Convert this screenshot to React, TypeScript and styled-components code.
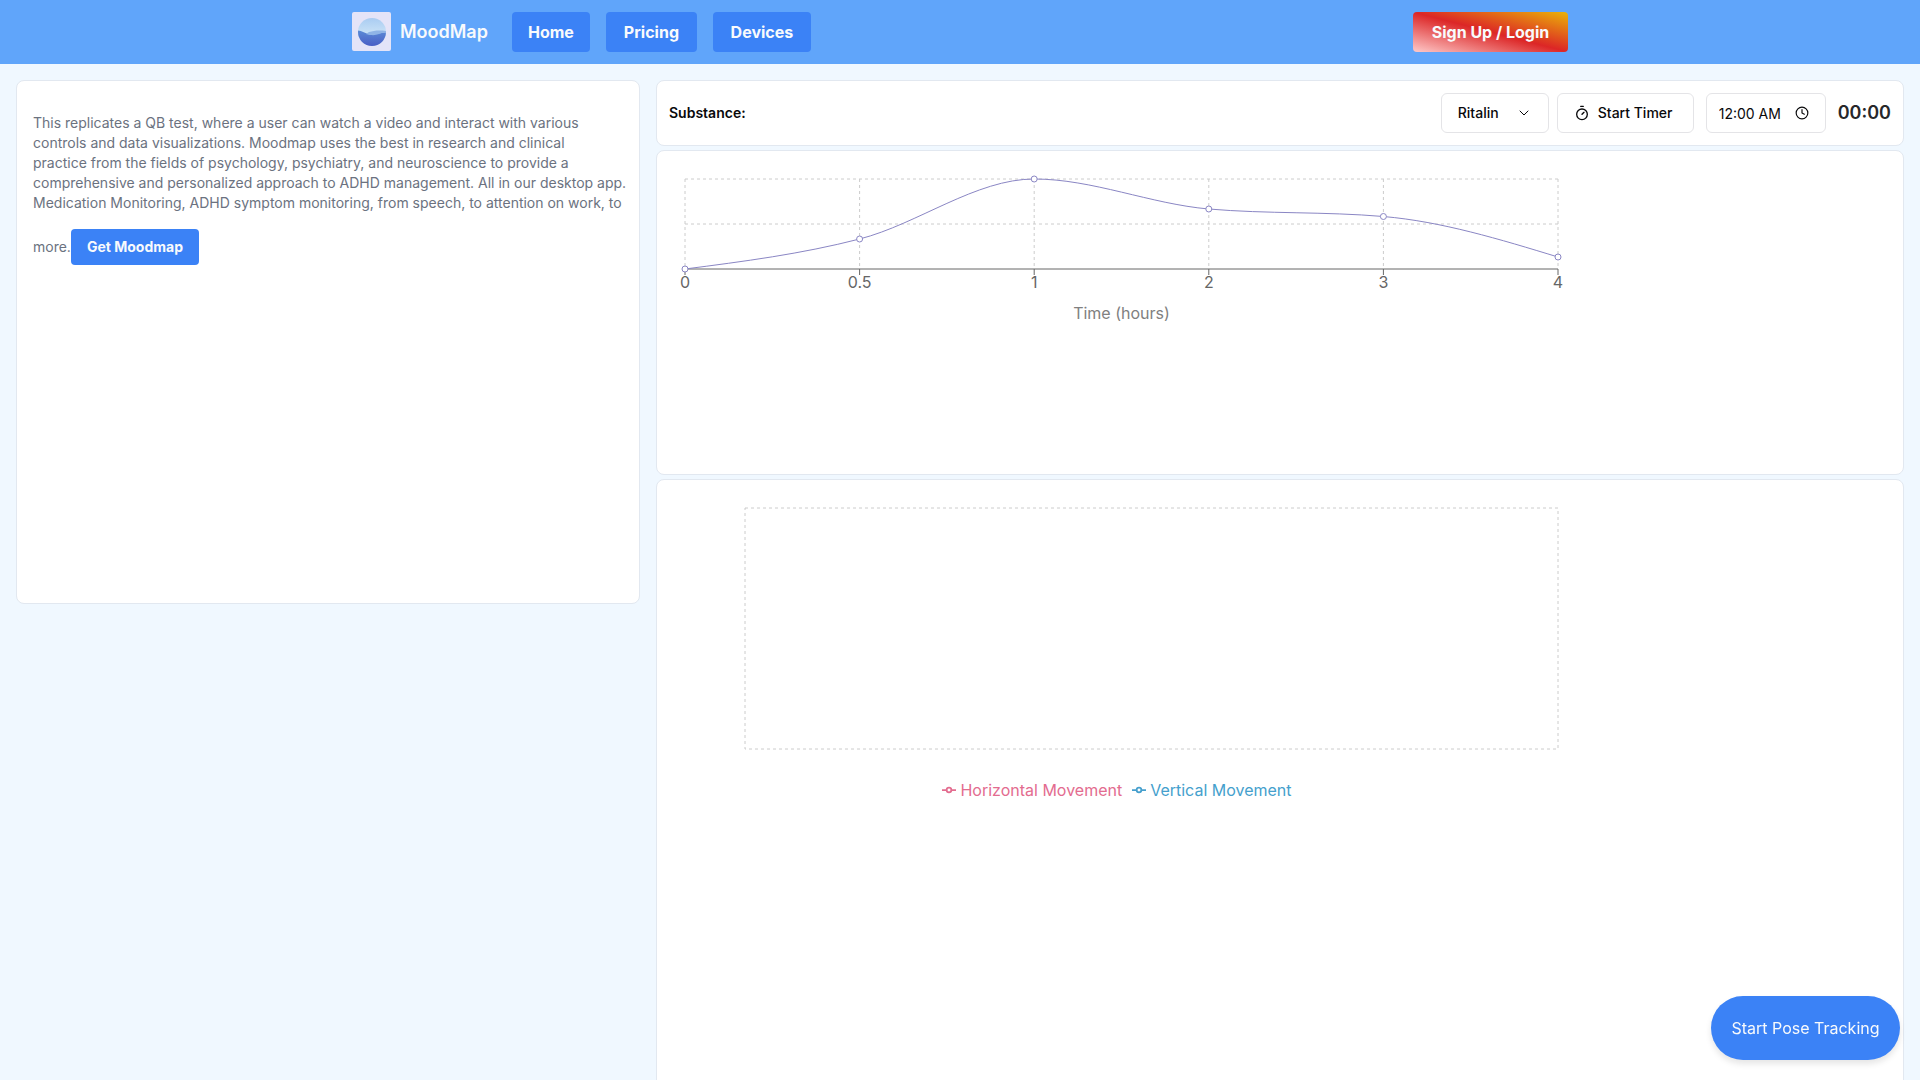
import React from "react";
import styled, { createGlobalStyle } from "styled-components";
import { ChevronDown, Clock, Timer } from "lucide-react";

const GlobalStyle = createGlobalStyle`
  *, *::before, *::after { box-sizing: border-box; }
  body {
    margin: 0;
    background: #f0f8ff;
    color: #09090b;
    font-family: Inter, "Liberation Sans", sans-serif;
    font-size: 16px;
    line-height: 24px;
  }
  button, input, select { font: inherit; color: inherit; }
  p, ul { margin: 0; padding: 0; }
`;

const Page = styled.div`
  display: flex;
  flex-direction: column;
  height: 100vh;
  overflow: hidden;
`;

const Header = styled.header`
  flex: none;
  background: #60a5fa;
`;

const HeaderInner = styled.div`
  display: flex;
  align-items: center;
  justify-content: space-between;
  max-width: 1280px;
  height: 64px;
  margin: 0 auto;
  padding: 0 32px;
`;

const Nav = styled.nav`
  display: flex;
  align-items: center;
  gap: 16px;
`;

const Brand = styled.a`
  display: flex;
  align-items: center;
  gap: 8px;
  margin-right: 8px;
  color: #f8fafc;
  font-size: 18px;
  font-weight: 600;
  text-decoration: none;
`;

const NavLink = styled.a<{ $minWidth: number }>`
  min-width: ${(p) => p.$minWidth}px;
  padding: 8px 12px;
  border-radius: 4px;
  background: #3b82f6;
  color: #f8fafc;
  font-weight: 700;
  text-align: center;
  text-decoration: none;
`;

const LoginButton = styled.button`
  min-width: 155px;
  height: 40px;
  padding: 0 16px;
  border: 0;
  border-radius: 4px;
  background: linear-gradient(to top right, #fecaca, #dc2626, #eab308);
  color: #f8fafc;
  font-weight: 700;
`;

const Main = styled.main`
  display: grid;
  grid-template-columns: minmax(0, 1fr) minmax(0, 2fr);
  align-items: start;
  gap: 16px;
  padding: 16px;
`;

const Column = styled.div`
  display: flex;
  flex-direction: column;
  gap: 4px;
`;

const Card = styled.section<{ $minHeight?: number }>`
  min-height: ${(p) => p.$minHeight ?? 0}px;
  padding: 16px;
  border: 1px solid #e2e8f0;
  border-radius: 8px;
  background: #fff;
`;

const Intro = styled.p`
  padding-top: 16px;
  color: #6b7280;
  font-size: 14px;
  line-height: 20px;
  white-space: nowrap;
`;

const GetLink = styled.a`
  display: inline-block;
  margin-top: 16px;
  padding: 8px 16px;
  border-radius: 4px;
  background: #3b82f6;
  color: #f8fafc;
  font-weight: 700;
  text-decoration: none;
`;

const Toolbar = styled(Card)`
  display: flex;
  align-items: center;
  justify-content: space-between;
  padding: 12px;
`;

const ToolbarLabel = styled.label`
  font-size: 14px;
  font-weight: 600;
`;

const Controls = styled.div`
  display: flex;
  align-items: center;
  gap: 12px;
  font-size: 14px;
`;

const ButtonPair = styled.div`
  display: flex;
  gap: 8px;
`;

const Field = styled.div<{ $width: number }>`
  display: flex;
  align-items: center;
  position: relative;
  width: ${(p) => p.$width}px;
  height: 40px;
  border: 1px solid #e4e4e7;
  border-radius: 6px;
  background: #fff;

  svg {
    position: absolute;
    right: 16px;
    pointer-events: none;
  }
`;

const Select = styled.select`
  appearance: none;
  width: 100%;
  height: 100%;
  padding: 0 16px;
  border: 0;
  background: transparent;
  font-weight: 500;
`;

const TimeInput = styled.input`
  width: 100%;
  height: 100%;
  padding: 0 12px;
  border: 0;
  background: transparent;
`;

const TimerButton = styled.button`
  display: flex;
  align-items: center;
  gap: 8px;
  min-width: 137px;
  height: 40px;
  padding: 0 16px;
  border: 1px solid #e4e4e7;
  border-radius: 6px;
  background: #fff;
  font-weight: 500;
`;

const Elapsed = styled.output`
  color: #27272a;
  font-size: 18px;
  font-weight: 600;
`;

const Plot = styled.svg`
  display: block;
  overflow: visible;
  font-size: 16px;
`;

const Legend = styled.ul`
  display: flex;
  justify-content: center;
  gap: 10px;
  max-width: 888px;
  padding-top: 12px;
  list-style: none;
`;

const LegendItem = styled.li<{ $color: string }>`
  display: flex;
  align-items: center;
  gap: 4px;
  color: ${(p) => p.$color};
`;

const PoseButton = styled.button`
  position: fixed;
  right: 20px;
  bottom: 20px;
  min-width: 189px;
  height: 64px;
  padding: 0 20px;
  border: 0;
  border-radius: 32px;
  background: #3b82f6;
  color: #f8fafc;
  box-shadow: 0 4px 6px rgba(0, 0, 0, 0.1);
`;

function Logo() {
  return (
    <svg width="40" height="40" viewBox="0 0 40 40" aria-hidden="true">
      <defs>
        <linearGradient id="sky" x1="0" y1="0" x2="0" y2="1">
          <stop offset="0" stopColor="#9dc3f0" />
          <stop offset="0.5" stopColor="#c6e0f6" />
        </linearGradient>
        <linearGradient id="sea" x1="0" y1="0" x2="0" y2="1">
          <stop offset="0" stopColor="#5b8bd6" />
          <stop offset="0.7" stopColor="#4a5fc6" />
        </linearGradient>
        <clipPath id="disc">
          <circle cx="20" cy="20" r="14" />
        </clipPath>
      </defs>
      <rect width="39" height="39" rx="2" fill="#e4e4f8" />
      <g clipPath="url(#disc)">
        <rect width="40" height="40" fill="url(#sky)" />
        <path d="M0 19c8-2 11 1 16 3s11-2 24-2v20H0z" fill="url(#sea)" />
        <path d="M17 20c5-1 8-2 18-1v2c-6-1-10 3-16 2-3 0-4-1-5-1z" fill="#8fb4e6" />
      </g>
    </svg>
  );
}

type Point = { x: number; y: number };

const hours = ["0", "0.5", "1", "2", "3", "4"];
const levels = [0, 20, 60, 40, 35, 8];
const left = 12;
const right = 885;
const top = 12;
const bottom = 102;

const points: Point[] = levels.map((v, i) => ({
  x: left + ((right - left) * i) / (levels.length - 1),
  y: bottom - ((bottom - top) * v) / 60,
}));

// Monotone cubic interpolation through evenly spaced points.
function curve(pts: Point[]): string {
  const h = pts[1].x - pts[0].x;
  const s = pts.slice(1).map((p, i) => (p.y - pts[i].y) / h);
  const m = pts.map((_, i) => {
    if (i === 0 || i === pts.length - 1) return 0;
    const a = s[i - 1];
    const b = s[i];
    return a * b <= 0
      ? 0
      : Math.sign(a) * 2 * Math.min(Math.abs(a), Math.abs(b), Math.abs(a + b) / 4);
  });
  m[0] = (3 * s[0] - m[1]) / 2;
  m[m.length - 1] = (3 * s[s.length - 1] - m[m.length - 2]) / 2;
  return pts
    .map((p, i) => {
      if (i === 0) return `M${p.x},${p.y}`;
      const q = pts[i - 1];
      const d = h / 3;
      return `C${q.x + d},${q.y + m[i - 1] * d} ${p.x - d},${p.y - m[i] * d} ${p.x},${p.y}`;
    })
    .join("");
}

function DoseChart() {
  return (
    <Plot width="900" height="160" role="img" aria-label="Substance level over time">
      <g stroke="#ccc" strokeDasharray="3 3">
        {[top, (top + bottom) / 2].map((y) => (
          <line key={y} x1={left} x2={right} y1={y} y2={y} />
        ))}
        {points.map((p) => (
          <line key={p.x} x1={p.x} x2={p.x} y1={top} y2={bottom} />
        ))}
      </g>
      <g stroke="#666">
        <line x1={left} x2={right} y1={bottom} y2={bottom} />
        {points.map((p) => (
          <line key={p.x} x1={p.x} x2={p.x} y1={bottom} y2={bottom + 6} />
        ))}
      </g>
      <path d={curve(points)} fill="none" stroke="#8a86c4" />
      {points.map((p) => (
        <circle key={p.x} cx={p.x} cy={p.y} r="3" fill="#fff" stroke="#8a86c4" />
      ))}
      <g fill="#666" textAnchor="middle">
        {points.map((p, i) => (
          <text key={p.x} x={p.x} y={bottom + 19}>
            {hours[i]}
          </text>
        ))}
      </g>
      <text x={(left + right) / 2} y="152" fill="#808080" textAnchor="middle">
        Time (hours)
      </text>
    </Plot>
  );
}

function MovementChart() {
  return (
    <Plot width="900" height="270" role="img" aria-label="Movement over time">
      <rect
        x="72"
        y="12"
        width="813"
        height="241"
        fill="none"
        stroke="#ccc"
        strokeDasharray="3 3"
      />
    </Plot>
  );
}

function LegendMark() {
  return (
    <svg width="14" height="14" viewBox="0 0 32 32" aria-hidden="true">
      <path
        d="M0 16h10.667A5.333 5.333 0 1 1 21.333 16H32M21.333 16A5.333 5.333 0 1 1 10.667 16"
        fill="none"
        stroke="currentColor"
        strokeWidth="4"
      />
    </svg>
  );
}

export default function App() {
  return (
    <Page>
      <GlobalStyle />
      <Header>
        <HeaderInner>
          <Nav>
            <Brand href="#">
              <Logo />
              MoodMap
            </Brand>
            <NavLink href="#home" $minWidth={78}>Home</NavLink>
            <NavLink href="#pricing" $minWidth={91}>Pricing</NavLink>
            <NavLink href="#devices" $minWidth={98}>Devices</NavLink>
          </Nav>
          <LoginButton type="button">Sign Up / Login</LoginButton>
        </HeaderInner>
      </Header>
      <Main>
        <Card $minHeight={524}>
          <Intro>
            This replicates a QB test, where a user can watch a video and interact with various
            <br />
            controls and data visualizations. Moodmap uses the best in research and clinical
            <br />
            practice from the fields of psychology, psychiatry, and neuroscience to provide a
            <br />
            comprehensive and personalized approach to ADHD management. All in our desktop app.
            <br />
            Medication Monitoring, ADHD symptom monitoring, from speech, to attention on work, to
            <br />
            more.<GetLink href="#get">Get Moodmap</GetLink>
          </Intro>
        </Card>
        <Column>
          <Toolbar>
            <ToolbarLabel htmlFor="substance">Substance:</ToolbarLabel>
            <Controls>
              <ButtonPair>
                <Field $width={108}>
                  <Select id="substance" defaultValue="Ritalin">
                    <option>Ritalin</option>
                  </Select>
                  <ChevronDown size={16} strokeWidth={1.5} />
                </Field>
                <TimerButton type="button">
                  <Timer size={16} />
                  Start Timer
                </TimerButton>
              </ButtonPair>
              <Field $width={120}>
                <TimeInput aria-label="Dose time" defaultValue="12:00 AM" />
                <Clock size={14} />
              </Field>
              <Elapsed>00:00</Elapsed>
            </Controls>
          </Toolbar>
          <Card $minHeight={325}>
            <DoseChart />
          </Card>
          <Card $minHeight={640}>
            <MovementChart />
            <Legend>
              <LegendItem $color="#e36c8f">
                <LegendMark />
                Horizontal Movement
              </LegendItem>
              <LegendItem $color="#459fcd">
                <LegendMark />
                Vertical Movement
              </LegendItem>
            </Legend>
          </Card>
        </Column>
      </Main>
      <PoseButton type="button">Start Pose Tracking</PoseButton>
    </Page>
  );
}
